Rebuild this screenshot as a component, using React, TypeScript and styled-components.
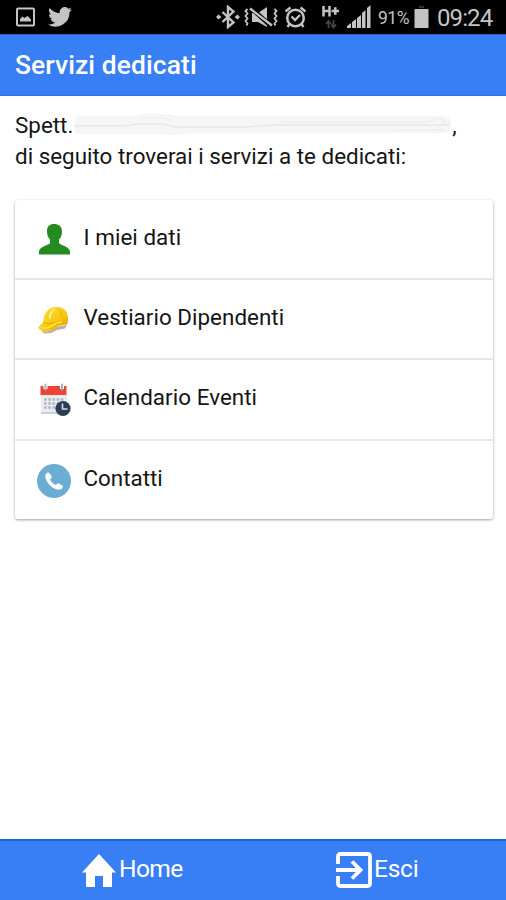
import React from 'react';
import styled, { createGlobalStyle } from 'styled-components';

const GlobalStyle = createGlobalStyle`
  * { box-sizing: border-box; }
  body { margin: 0; background: #fff; }
`;

const Screen = styled.div`
  display: flex;
  flex-direction: column;
  width: 506px;
  height: 900px;
  overflow: hidden;
  background: #fff;
  color: #151515;
  font-family: Roboto, sans-serif;
  font-size: 22.4px;
`;

const StatusBar = styled.div`
  display: flex;
  flex: none;
  align-items: center;
  height: 34px;
  padding: 0 12px 0 15px;
  background: #000;
  color: #c4c4c4;
`;

const StatusIcon = styled.svg<{ $gap?: number }>`
  display: block;
  flex: none;
  margin-left: ${(p) => p.$gap ?? 0}px;
`;

const Spacer = styled.div`
  flex: 1;
`;

const Battery = styled.span`
  width: 32px;
  margin-left: 7px;
  font-size: 17.5px;
  line-height: 34px;
  padding-top: 2px;
  letter-spacing: -0.5px;
  white-space: nowrap;
`;

const Clock = styled.span`
  width: 57px;
  margin-left: 8px;
  padding-top: 2px;
  font-size: 24px;
  line-height: 32px;
  letter-spacing: -0.9px;
  white-space: nowrap;
`;

const Header = styled.header`
  flex: none;
  height: 62px;
  padding: 0 15px;
  border-top: 1px solid #2b64c4;
  border-bottom: 1px solid #2f73e4;
  background: #387ef5;
`;

const Title = styled.h1`
  margin: 0;
  color: #fff;
  font-size: 26.4px;
  font-weight: 500;
  line-height: 60px;
  letter-spacing: 0.1px;
`;

const Content = styled.main`
  flex: 1;
  padding: 14px 13px 0 15px;
`;

const Intro = styled.p`
  margin: 0;
  line-height: 31px;
  letter-spacing: 0.01px;
  white-space: nowrap;
`;

const NameLine = styled.span`
  display: flex;
`;

const Redacted = styled.svg`
  display: block;
  flex: none;
  margin: 3px 0 0 0;
`;

const Card = styled.ul`
  margin: 28px 0 0;
  padding: 0;
  height: 319px;
  list-style: none;
  border-radius: 3px;
  background: #fff;
  box-shadow: 0 1px 3px rgba(0, 0, 0, 0.38);
`;

const Row = styled.li`
  display: flex;
  align-items: center;
  height: 80.2px;
  padding-left: 21px;
  border-bottom: 2px solid #e7e7e7;
  &:last-child { height: 78.4px; border-bottom: 0; }
`;

const RowIcon = styled.svg`
  display: block;
  flex: none;
  width: 36px;
  height: 36px;
  margin-top: 2px;
`;

const Label = styled.span<{ $spacing: number }>`
  margin: -4px 0 0 11.5px;
  line-height: 30px;
  letter-spacing: ${(p) => p.$spacing}px;
`;

const Footer = styled.nav`
  display: grid;
  flex: none;
  grid-template-columns: 265px 1fr;
  height: 61px;
  border-top: 2px solid #1768df;
  background: #387ef5;
`;

const Tab = styled.a<{ $inset: number }>`
  display: flex;
  align-items: center;
  padding-left: ${(p) => p.$inset}px;
  padding-bottom: 2px;
  color: #fff;
  font-size: 24.6px;
`;

const TabLabel = styled.span<{ $gap: number; $spacing: number }>`
  margin: -2px 0 0 ${(p) => p.$gap}px;
  line-height: 30px;
  letter-spacing: ${(p) => p.$spacing}px;
`;

const PersonIcon = () => (
  <RowIcon viewBox="0 0 36 36">
    <path
      d="M18 2c-4.500 0-7 2.500-7 7 0 4 1 6.500 3 8.500v3.500c-2 2.500-10.500 3.500-11 8.500v3h31v-3c-.5-5-9-6-11-8.500v-3.500c2-2 3-4.500 3-8.500 0-4.500-3.500-7-8-7z"
      fill="#258b20"
    />
  </RowIcon>
);

const HelmetIcon = () => (
  <RowIcon viewBox="0 1 36 36">
    <defs>
      <linearGradient id="helmet" x1="0" y1="0" x2="1" y2="1">
        <stop offset="0" stopColor="#ffdf45" />
        <stop offset="0.6" stopColor="#f9c80d" />
        <stop offset="1" stopColor="#d98c05" />
      </linearGradient>
    </defs>
    <path d="M4 27.500c1 3 6 3.500 10 2.500 4-1 5-4 9-4.500 4-.5 8-1 9-4l-3 6-8 1.500-6 3-7 .5z" fill="#8c7c62" opacity=".6" />
    <path
      d="M7.500 20C8 11 13 6 20 6c6-.5 10 2.500 11.300 7 .8 3.500 1 7 .2 9.500-2 2-5.500 1.200-9 2.700-3.500 1.500-5 4-9 4.800-4 .8-10-.3-10.800-2.800-.4-2.200 2.800-3.500 4.800-7.200z"
      fill="url(#helmet)"
    />
    <path d="M7.500 21c3 2.500 8 2 11.500 0" fill="none" stroke="#e5a706" strokeWidth="1" />
    <path d="M14 18c-.5-4 1-7.500 4.500-9.500" fill="none" stroke="#fff08a" strokeWidth="2" />
    <path d="M21.500 7.500c3 2 4 5 4.500 9" fill="none" stroke="#e2a30a" strokeWidth=".8" />
    <path d="M5 26.500c4 1.500 8 .3 11-2s6-3.200 10-3.500" fill="none" stroke="#ffe965" strokeWidth="1.200" />
  </RowIcon>
);

const CalendarIcon = () => (
  <RowIcon viewBox="0 0 36 36">
    <path d="M5 12h26v19H5z" fill="#e9edef" />
    <path d="M5 30h20v1.800H5z" fill="#c5cbcf" />
    <path d="M4.500 4h26v9h-26z" fill="#ee4437" />
    <path d="M9.500 3v4M26 3v4" stroke="#fff" strokeWidth="4" />
    <path d="M9.500 2.500v5M26 2.500v5" stroke="#a9b2b6" strokeWidth="2" strokeLinecap="round" />
    <path d="M8 17.500h20M8 21.500h20M8 25.500h16" stroke="#b4bcc2" strokeWidth="2.300" strokeDasharray="2.700 1.500" />
    <circle cx="27" cy="26.500" r="7.600" fill="#2c3e56" />
    <path d="M26.500 21.500v5.500h5" fill="none" stroke="#d8dde2" strokeWidth="1.600" />
  </RowIcon>
);

const PhoneIcon = () => (
  <RowIcon viewBox="0 0 36 36">
    <circle cx="18" cy="18" r="17" fill="#6caed3" />
    <path
      d="M11.300 9.700c-1.500.8-2.300 2-2 4 .8 5.500 6.300 11.800 12.700 13 2 .4 4-.6 4.800-2.600.3-.8.100-1.300-.6-1.700l-3.300-2c-.7-.4-1.300-.3-1.800.3l-1.200 1.300c-2.700-1.100-4.700-3.100-5.900-5.800l1.300-1.300c.5-.5.6-1.100.3-1.700l-2.300-3.100c-.5-.7-1.200-.8-2-.4z"
      fill="#fff"
    />
  </RowIcon>
);

const services = [
  { label: 'I miei dati', Icon: PersonIcon, spacing: 0.05 },
  { label: 'Vestiario Dipendenti', Icon: HelmetIcon, spacing: 0.03 },
  { label: 'Calendario Eventi', Icon: CalendarIcon, spacing: 0.05 },
  { label: 'Contatti', Icon: PhoneIcon, spacing: 0 },
];

export default function App() {
  return (
    <Screen>
      <GlobalStyle />
      <StatusBar>
        <StatusIcon width="21" height="22" viewBox="0 0 21 22">
          <rect x="2" y="2.500" width="17" height="17" rx="1" fill="none" stroke="currentColor" strokeWidth="2" />
          <path d="M5 15.500v-2.500l2.500-2.500 2 1.500 3-2 3.500 3.500v2z" fill="currentColor" />
        </StatusIcon>
        <StatusIcon $gap={12} width="24" height="20" viewBox="0 0 24 20">
          <path
            fill="currentColor"
            d="M24 2.400a10 10 0 0 1-2.800.8A4.900 4.900 0 0 0 23.300.5a10 10 0 0 1-3.100 1.200 4.900 4.900 0 0 0-8.400 4.500A14 14 0 0 1 1.700 1a4.900 4.900 0 0 0 1.500 6.600A4.900 4.900 0 0 1 1 7a4.900 4.900 0 0 0 3.900 4.900 4.900 4.900 0 0 1-2.200.1 4.900 4.900 0 0 0 4.600 3.400A9.900 9.900 0 0 1 0 17.400 14 14 0 0 0 21.500 5 10 10 0 0 0 24 2.400z"
          />
        </StatusIcon>
        <Spacer />
        <StatusIcon width="24" height="24" viewBox="0 0 24 24">
          <path d="M6.500 7l11 10.500L12 22V2l5.500 4.500L6.500 17" fill="none" stroke="currentColor" strokeWidth="2.400" />
          <path d="M2.500 9.500L5.500 12l-3 2.500L0 12zM21.500 9.500L24 12l-2.500 2.500-3-2.500z" fill="currentColor" />
        </StatusIcon>
        <StatusIcon $gap={4} width="34" height="22" viewBox="0 0 34 22">
          <path d="M8 7h6l9-6v20l-9-5H8z" fill="currentColor" />
          <path d="M7 2l20 18" stroke="#000" strokeWidth="4.500" />
          <path d="M6 2.500l22 17" stroke="currentColor" strokeWidth="2.300" />
          <path
            d="M3.500 3L1.500 5l2 2.500-2 2.500 2 2.500-2 2.500 2 2.500-1 2M30.500 3l2 2-2 2.500 2 2.500-2 2.500 2 2.500-2 2.500 1 2"
            fill="none" stroke="currentColor" strokeWidth="1.800"
          />
        </StatusIcon>
        <StatusIcon $gap={6} width="23" height="24" viewBox="0 0 23 24">
          <circle cx="11.500" cy="13" r="8.300" fill="none" stroke="currentColor" strokeWidth="2.500" />
          <path d="M1.500 6.500L6.500 2.500M16.500 2.500l5 4M7.500 11.500l3.500 3.500 5-5M5.500 19l-2 3M17.500 19l2 3" fill="none" stroke="currentColor" strokeWidth="2.300" />
        </StatusIcon>
        <StatusIcon $gap={14} width="20" height="26" viewBox="0 0 20 26">
          <path d="M2.500 2v10.500M8.500 2v10.500M2.500 7h6M10.500 7h7.500M14.300 3.300v7.500" stroke="currentColor" strokeWidth="2.500" />
          <path d="M7.500 24v-6M5 20l2.500-3 2.500 3M12.500 16v7M10 20.500l2.500 3 2.500-3" fill="none" stroke="#444" strokeWidth="1.800" />
        </StatusIcon>
        <StatusIcon $gap={6} width="24" height="24" viewBox="0 0 24 24">
          <path d="M0 23v-2l4-3v5zM5 23v-6l4-3v9zM10 23V13l4-3v13zM15 23V8l3.500-3v18zM20 23V3l3.500-3v23z" fill="currentColor" />
        </StatusIcon>
        <Battery>91%</Battery>
        <StatusIcon $gap={4} width="15" height="24" viewBox="0 0 15 24">
          <path d="M5 1h5v2H5z" fill="#333" />
          <path d="M.5 4h14v19H.5z" fill="currentColor" />
        </StatusIcon>
        <Clock>09:24</Clock>
      </StatusBar>
      <Header>
        <Title>Servizi dedicati</Title>
      </Header>
      <Content>
        <Intro>
          <NameLine>
            Spett.
            <Redacted width="379" height="24" viewBox="0 0 379 24">
              <path d="M3 3l58 0 8-2h25l10 2 270 0q5 3 4 12l-2 5H120l-16 2-30-1H3l-2-8z" fill="#f6f6f6" />
              <path d="M2 13h50l12-2h25l14 3h70l12-1 22-1h170" fill="none" stroke="#e8e8e8" strokeWidth="1.300" />
              <path d="M68 5h22l10 3M210 9h145l10-4 7 3-7 7 5 4M320 17h50" fill="none" stroke="#ebebeb" />
            </Redacted>
            ,
          </NameLine>
          di seguito troverai i servizi a te dedicati:
        </Intro>
        <Card>
          {services.map(({ label, Icon, spacing }) => (
            <Row key={label}>
              <Icon />
              <Label $spacing={spacing}>{label}</Label>
            </Row>
          ))}
        </Card>
      </Content>
      <Footer>
        <Tab $inset={81}>
          <svg width="36" height="36" viewBox="0 0 36 36">
            <path d="M18 2L1 20.500h4V35h9V24h8v11h9V20.500h4z" fill="#fff" />
          </svg>
          <TabLabel $gap={2} $spacing={-0.6}>Home</TabLabel>
        </Tab>
        <Tab $inset={71}>
          <svg width="36" height="36" viewBox="0 0 36 36">
            <path d="M2 12V4.500Q2 2 4.500 2h27Q34 2 34 4.500v27q0 2.500-2.500 2.500h-27Q2 34 2 31.500V24" fill="none" stroke="#fff" strokeWidth="3.800" />
            <path d="M0 18h24M16 9.500l8.500 8.500-8.500 8.500" fill="none" stroke="#fff" strokeWidth="3.800" />
          </svg>
          <TabLabel $gap={2} $spacing={-0.3}>Esci</TabLabel>
        </Tab>
      </Footer>
    </Screen>
  );
}
